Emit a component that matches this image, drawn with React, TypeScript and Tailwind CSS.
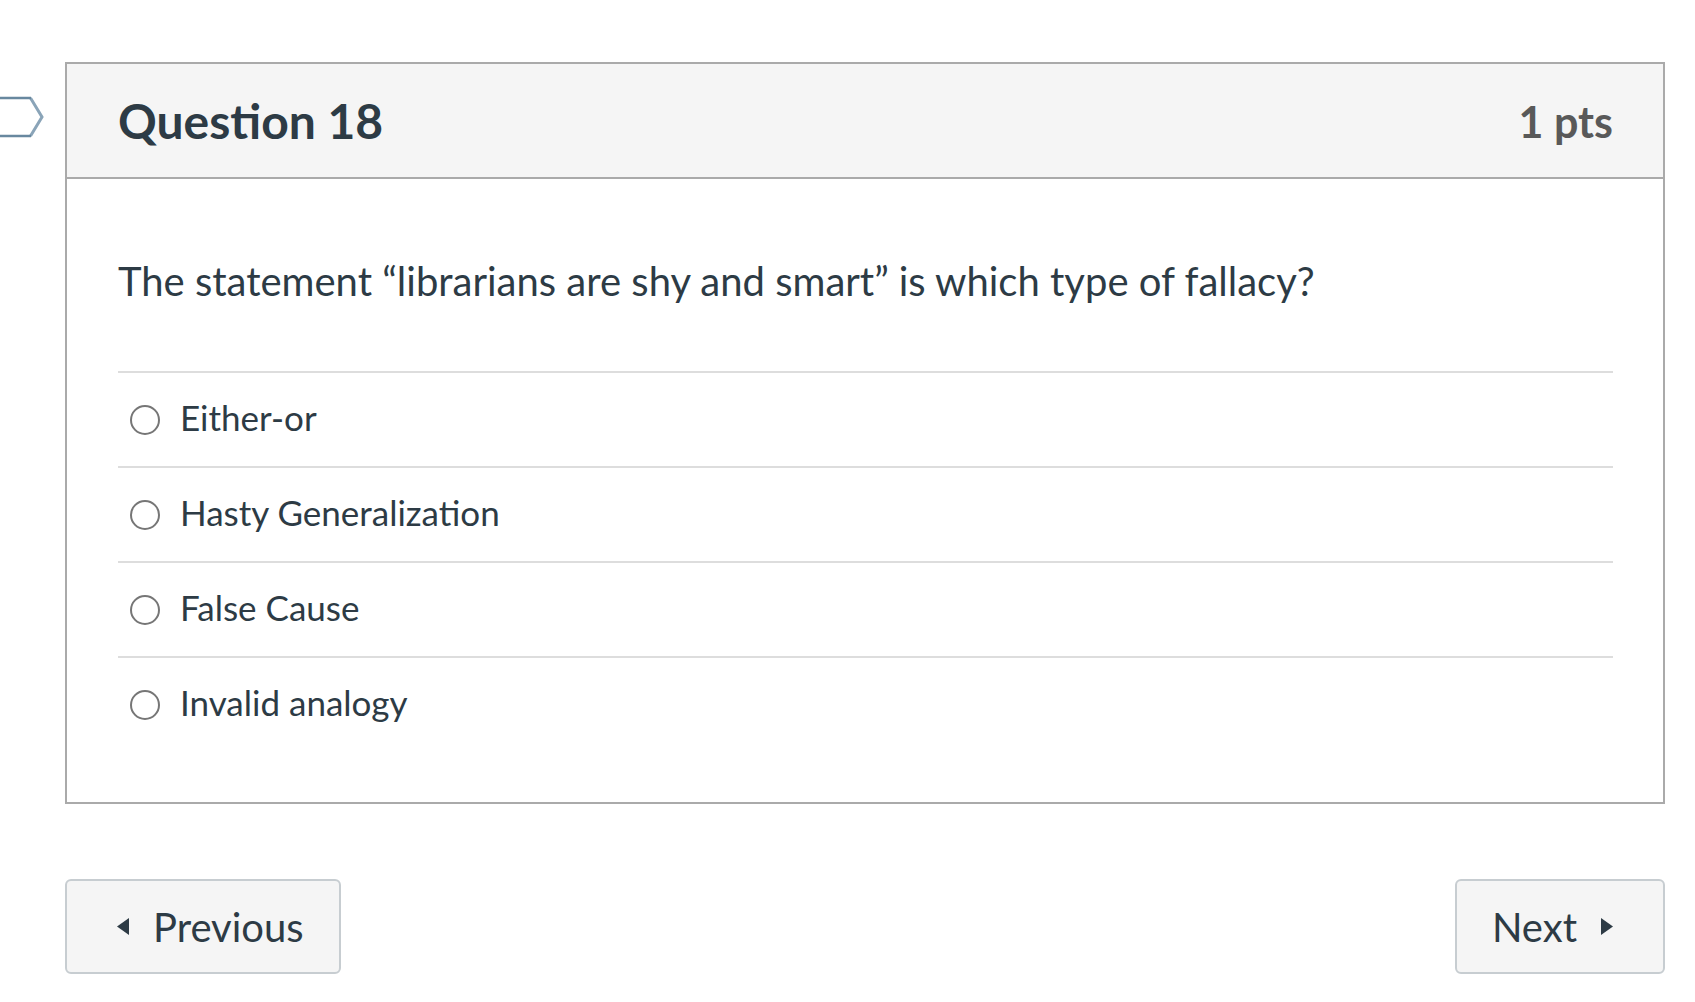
import React, { useState } from 'react';

const ANSWERS = ['Either-or', 'Hasty Generalization', 'False Cause', 'Invalid analogy'];

export default function App() {
  const [selected, setSelected] = useState<string | null>(null);

  return (
    <main className="relative min-h-screen bg-white pt-[62px] pr-[30px] pl-[65px] font-[Lato,sans-serif] text-[#2d3b45]">
      {/* flag marker that pokes out from the left edge */}
      <button type="button" aria-label="Flag question" className="absolute top-[96px] left-0">
        <svg width="44" height="42" viewBox="0 0 44 42" fill="none">
          <path d="M30.5 2L42 21L30.5 40" stroke="#8aa4b8" strokeWidth="3" />
          <path d="M0 2H31M0 40H31" stroke="#68889f" strokeWidth="2.4" />
        </svg>
      </button>

      <section className="border-2 border-[#aaaaaa]">
        <header className="flex h-[115px] items-center justify-between border-b-2 border-[#aaaaaa] bg-[#f5f5f5] pr-[50px] pl-[51px]">
          <h1 className="text-[48px] font-bold">Question 18</h1>
          <span className="pt-1 text-[43px] font-bold text-[#595959]">1 pts</span>
        </header>

        <div className="pt-[72px] pr-[50px] pb-[51px] pl-[51px]">
          <p className="text-[40px] leading-[60px]">
            The statement “librarians are shy and smart” is which type of fallacy?
          </p>
          <fieldset className="mt-[60px]">
            {ANSWERS.map((answer) => (
              <label key={answer} className="flex h-[95px] items-center gap-5 border-t-2 border-[#dddddd] pl-3 text-[35px]">
                <input
                  type="radio"
                  name="answer"
                  checked={selected === answer}
                  onChange={() => setSelected(answer)}
                  className="size-[30px] appearance-none rounded-full border-2 border-[#767676] bg-white checked:border-8"
                />
                <span className="pb-1">{answer}</span>
              </label>
            ))}
          </fieldset>
        </div>
      </section>

      <nav className="mt-[75px] flex justify-between text-[40px]">
        <button
          type="button"
          className="flex h-[95px] items-center gap-6 rounded-md border-2 border-[#c7cdd1] bg-[#f5f5f5] pr-[35px] pl-[50px]"
        >
          <svg width="12" height="17" viewBox="0 0 12 17" fill="currentColor">
            <path d="M12 0V17L0 8.5Z" />
          </svg>
          Previous
        </button>
        <button
          type="button"
          className="flex h-[95px] items-center gap-6 rounded-md border-2 border-[#c7cdd1] bg-[#f5f5f5] pr-[50px] pl-[35px]"
        >
          Next
          <svg width="12" height="17" viewBox="0 0 12 17" fill="currentColor">
            <path d="M0 0V17L12 8.5Z" />
          </svg>
        </button>
      </nav>
    </main>
  );
}
